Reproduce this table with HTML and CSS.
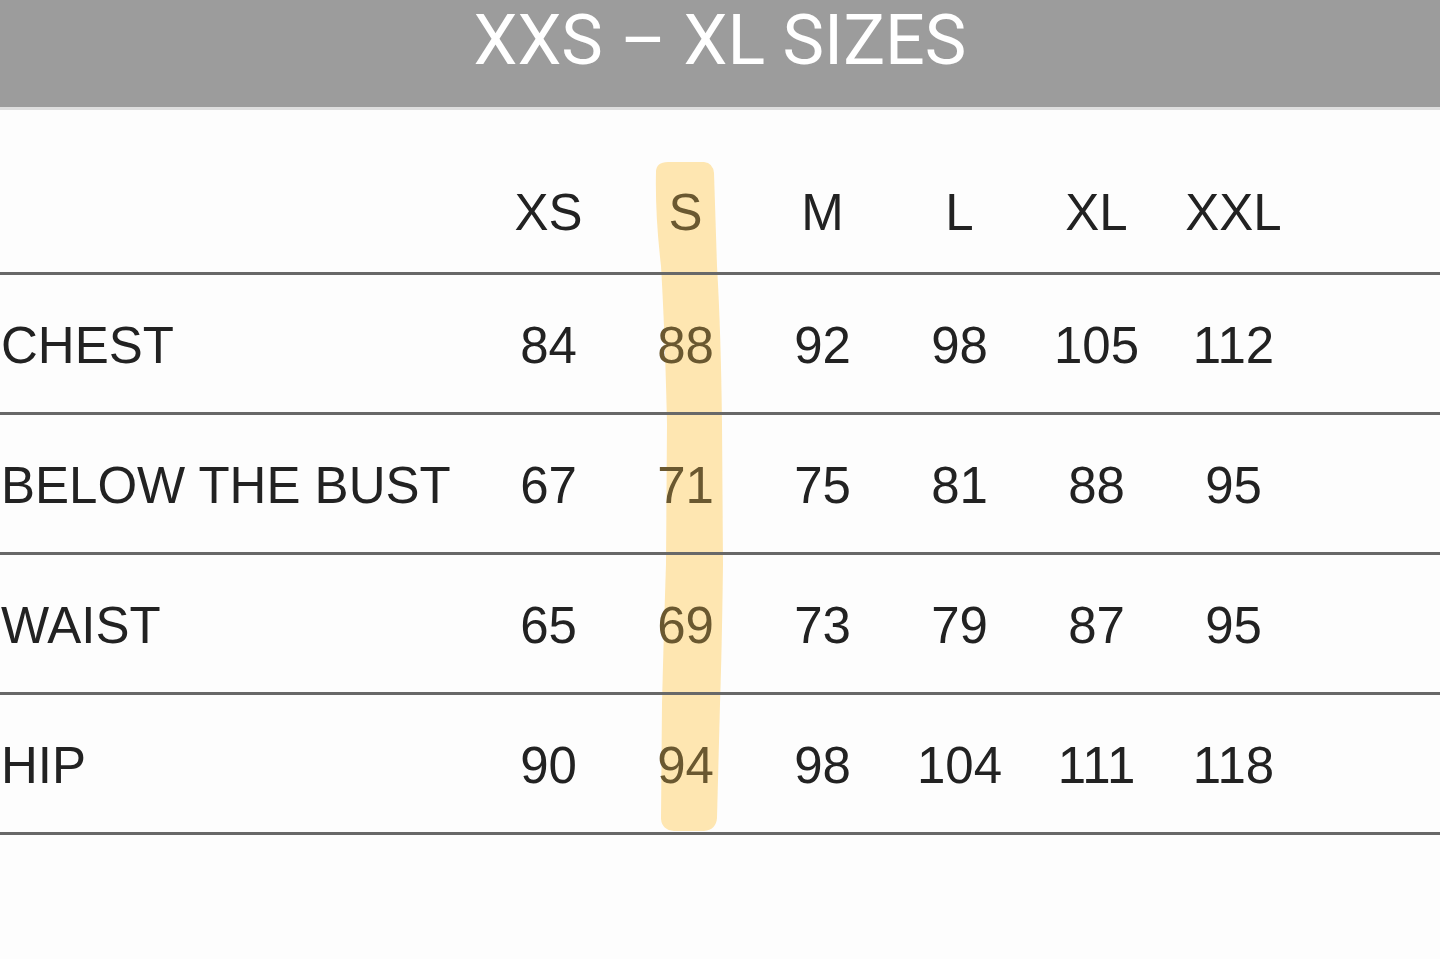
FILE: index.html
```html
<!DOCTYPE html>
<html lang="en">
<head>
<meta charset="utf-8">
<title>XXS – XL Sizes</title>
<link rel="stylesheet" href="styles.css">
</head>
<body>
<div class="page">
  <header class="banner">
    <h1 class="banner-title">XXS – XL SIZES</h1>
  </header>
  <div class="chart">
    <svg class="highlight" width="1440" height="959" viewBox="0 0 1440 959" aria-hidden="true">
      <path d="M656 172 Q656 162 668 162 L704 162 Q713 163 714 173 L717 266 Q721 334 722 424 L723 564 Q722 644 720 704 L717 818 Q716 830 704 831 L674 831 Q662 830 661 819 L662 704 Q664 624 666 564 L667 424 Q665 334 661 266 Q655 214 656 172 Z" fill="#fee6b1"/>
    </svg>
    <div class="row row-head">
      <div class="label"></div>
      <div class="cell">XS</div>
      <div class="cell hl">S</div>
      <div class="cell">M</div>
      <div class="cell">L</div>
      <div class="cell">XL</div>
      <div class="cell">XXL</div>
    </div>
    <div class="row">
      <div class="label">CHEST</div>
      <div class="cell">84</div>
      <div class="cell hl">88</div>
      <div class="cell">92</div>
      <div class="cell">98</div>
      <div class="cell">105</div>
      <div class="cell">112</div>
    </div>
    <div class="row">
      <div class="label">BELOW THE BUST</div>
      <div class="cell">67</div>
      <div class="cell hl">71</div>
      <div class="cell">75</div>
      <div class="cell">81</div>
      <div class="cell">88</div>
      <div class="cell">95</div>
    </div>
    <div class="row">
      <div class="label">WAIST</div>
      <div class="cell">65</div>
      <div class="cell hl">69</div>
      <div class="cell">73</div>
      <div class="cell">79</div>
      <div class="cell">87</div>
      <div class="cell">95</div>
    </div>
    <div class="row">
      <div class="label">HIP</div>
      <div class="cell">90</div>
      <div class="cell hl">94</div>
      <div class="cell">98</div>
      <div class="cell">104</div>
      <div class="cell">111</div>
      <div class="cell">118</div>
    </div>
  </div>
</div>
</body>
</html>
```
FILE: styles.css
```css
html, body {
  margin: 0;
  padding: 0;
  background: #fdfdfd;
}

.page {
  position: relative;
  width: 1440px;
  height: 959px;
  overflow: hidden;
  font-family: "Liberation Sans", Arial, sans-serif;
  color: #222;
}

.banner {
  height: 110px;
  box-sizing: border-box;
  padding-top: 5px;
  background: #9c9c9c;
  border-bottom: 3px solid #dedede;
  display: flex;
  justify-content: center;
}

.banner-title {
  margin: 0;
  font-family: Roboto, "Liberation Sans", sans-serif;
  font-weight: 400;
  font-size: 70px;
  line-height: 1;
  color: #ffffff;
}

.chart {
  position: relative;
}

.highlight {
  position: absolute;
  left: 0;
  top: -110px;
  z-index: 0;
  pointer-events: none;
}

.row {
  position: relative;
  z-index: 1;
  display: grid;
  grid-template-columns: 480px repeat(6, 137px) 1fr;
  align-items: center;
  height: 140px;
  box-sizing: border-box;
  padding-top: 4px;
  border-bottom: 3px solid #686868;
  font-size: 51px;
  line-height: 1;
}

.row-head {
  height: 165px;
  padding-top: 42px;
}

.label {
  padding-left: 1px;
  white-space: nowrap;
}

.cell {
  text-align: center;
}

.cell.hl {
  color: #6a5830;
}
```
